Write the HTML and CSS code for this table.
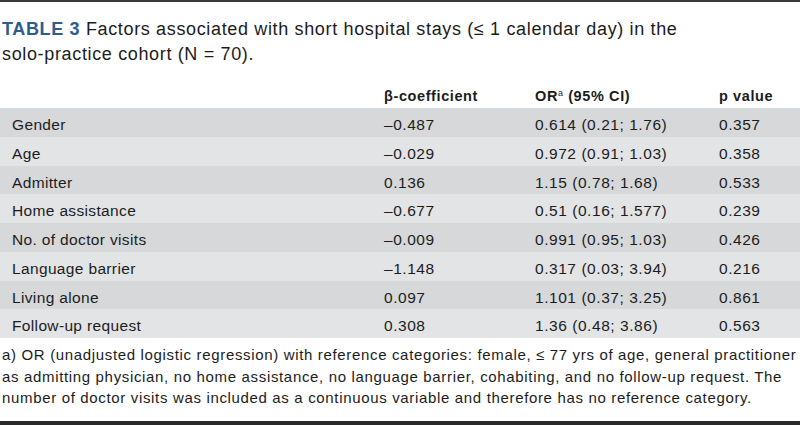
FILE: index.html
```html
<!DOCTYPE html>
<html lang="en">
<head>
<meta charset="utf-8">
<link rel="stylesheet" href="styles.css">
</head>
<body>
<div class="figure">
  <p class="caption"><span class="label">TABLE 3</span> Factors associated with short hospital stays (≤ 1 calendar day) in the<br>solo-practice cohort (N = 70).</p>
  <table class="data">
    <thead>
      <tr>
        <th class="c1"></th>
        <th class="c2">β-coefficient</th>
        <th class="c3">OR<sup>a</sup> (95% CI)</th>
        <th class="c4">p value</th>
      </tr>
    </thead>
    <tbody>
      <tr><td>Gender</td><td class="num">–0.487</td><td class="num">0.614 (0.21; 1.76)</td><td class="num">0.357</td></tr>
      <tr><td>Age</td><td class="num">–0.029</td><td class="num">0.972 (0.91; 1.03)</td><td class="num">0.358</td></tr>
      <tr><td>Admitter</td><td class="num">0.136</td><td class="num">1.15 (0.78; 1.68)</td><td class="num">0.533</td></tr>
      <tr><td>Home assistance</td><td class="num">–0.677</td><td class="num">0.51 (0.16; 1.577)</td><td class="num">0.239</td></tr>
      <tr><td>No. of doctor visits</td><td class="num">–0.009</td><td class="num">0.991 (0.95; 1.03)</td><td class="num">0.426</td></tr>
      <tr><td>Language barrier</td><td class="num">–1.148</td><td class="num">0.317 (0.03; 3.94)</td><td class="num">0.216</td></tr>
      <tr><td>Living alone</td><td class="num">0.097</td><td class="num">1.101 (0.37; 3.25)</td><td class="num">0.861</td></tr>
      <tr><td>Follow-up request</td><td class="num">0.308</td><td class="num">1.36 (0.48; 3.86)</td><td class="num">0.563</td></tr>
    </tbody>
  </table>
  <p class="note">a) OR (unadjusted logistic regression) with reference categories: female, ≤ 77 yrs of age, general practitioner<br>as admitting physician, no home assistance, no language barrier, cohabiting, and no follow-up request. The<br>number of doctor visits was included as a continuous variable and therefore has no reference category.</p>
</div>
</body>
</html>
```
FILE: styles.css
```css
html, body {
  margin: 0;
  padding: 0;
  background: #ffffff;
}
body {
  width: 800px;
  height: 425px;
  overflow: hidden;
  font-family: "Liberation Sans", Arial, sans-serif;
  color: #1c1c1c;
}
.figure {
  border-top: 2px solid #3a3a3a;
  border-bottom: 4px solid #2a2a2a;
  height: 425px;
  box-sizing: border-box;
  display: flex;
  flex-direction: column;
}
.caption {
  margin: 0;
  padding: 15px 0 0 2px;
  font-size: 18px;
  line-height: 25px;
  letter-spacing: 0.65px;
  white-space: nowrap;
}
.label {
  font-weight: bold;
  color: #2d5c8e;
}
.data {
  border-collapse: collapse;
  width: 800px;
  margin-top: 16px;
  font-size: 15.5px;
  letter-spacing: 0.35px;
}
.data th {
  text-align: left;
  font-weight: bold;
  font-size: 14.5px;
  letter-spacing: 0.6px;
  height: 20px;
  padding: 5px 0 0 12px;
  vertical-align: top;
  line-height: 16px;
}
.data th sup {
  font-size: 9px;
  font-weight: normal;
  vertical-align: 5px;
  line-height: 0;
}
.c1 { width: 360px; }
.c2 { width: 139px; }
.c3 { width: 172px; }
.data td {
  height: 28.75px;
  box-sizing: border-box;
  padding: 5px 0 0 12px;
  line-height: 23.75px;
  vertical-align: top;
  white-space: nowrap;
}
.data td.num {
  letter-spacing: 0.55px;
}
.data tbody tr:nth-child(odd) {
  background: #d7d8da;
}
.data tbody tr:nth-child(even) {
  background: #e3e4e6;
}
.note {
  margin: 0;
  padding: 6px 0 0 2px;
  font-size: 15px;
  line-height: 21.7px;
  letter-spacing: 0.66px;
  white-space: nowrap;
}
```
